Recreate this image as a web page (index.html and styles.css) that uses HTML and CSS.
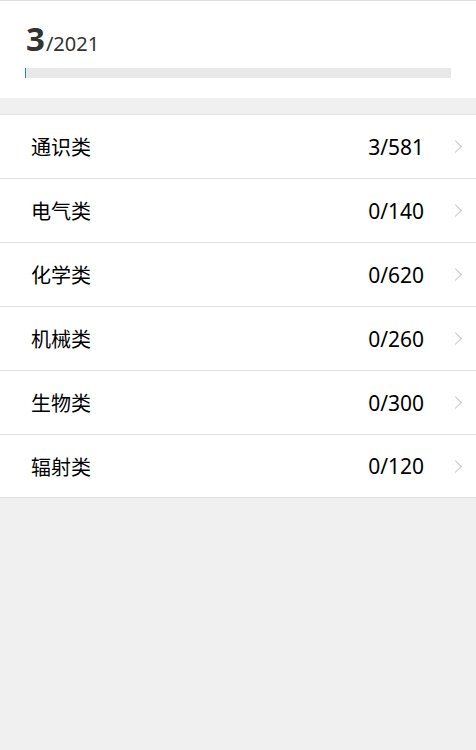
FILE: index.html
```html
<!DOCTYPE html>
<html lang="zh-CN">
<head>
    <meta charset="UTF-8" />
    <meta name="viewport" content="width=device-width, initial-scale=1" />
    <title>答题进度</title>
    <link rel="stylesheet" href="styles.css">
</head>
<body>

    <header class="summary">
        <div class="score">
            <span class="score-done">3</span><span class="score-total">/2021</span>
        </div>
        <div class="progress">
            <div class="progress-fill" style="width: 0.15%"></div>
        </div>
    </header>

    <ul class="category-list">
        <li class="category">
            <span class="category-name">通识类</span>
            <span class="category-count">3/581</span>
            <span class="chevron"></span>
        </li>
        <li class="category">
            <span class="category-name">电气类</span>
            <span class="category-count">0/140</span>
            <span class="chevron"></span>
        </li>
        <li class="category">
            <span class="category-name">化学类</span>
            <span class="category-count">0/620</span>
            <span class="chevron"></span>
        </li>
        <li class="category">
            <span class="category-name">机械类</span>
            <span class="category-count">0/260</span>
            <span class="chevron"></span>
        </li>
        <li class="category">
            <span class="category-name">生物类</span>
            <span class="category-count">0/300</span>
            <span class="chevron"></span>
        </li>
        <li class="category">
            <span class="category-name">辐射类</span>
            <span class="category-count">0/120</span>
            <span class="chevron"></span>
        </li>
    </ul>

</body>
</html>
```

FILE: styles.css
```css
body {
    margin: 0;
    font-family: 'Noto Sans', 'Noto Sans CJK SC', sans-serif;
    background-color: #f0f0f0;
    color: #000;
    border-top: 1px solid #dddddd;
}

.summary {
    background-color: white;
    padding: 18px 25px 20px;
}

.score {
    color: #333;
    line-height: 40px;
    padding-left: 1px;
}

.score-done {
    font-size: 33px;
    font-weight: bold;
}

.score-total {
    font-size: 20px;
    margin-left: 1px;
}

.progress {
    margin-top: 3px;
    height: 10px;
    background-color: #e8e8e8;
}

.progress-fill {
    height: 100%;
    min-width: 1px;
    background-color: #2a7de1;
}

.category-list {
    list-style: none;
    margin: 16px 0 0;
    padding: 0;
    background-color: white;
    border-top: 1px solid #e0e0e0;
    border-bottom: 1px solid #e0e0e0;
}

.category {
    display: flex;
    align-items: center;
    height: 63px;
    padding: 0 14px 0 31px;
    border-top: 1px solid #e0e0e0;
    font-size: 20px;
}

.category:first-child {
    border-top: none;
}

.category:last-child {
    height: 62px;
}

.category-name {
    flex: 1;
    font-family: 'Noto Sans CJK SC', sans-serif;
}

.category-count {
    font-size: 21px;
    margin-right: 27px;
}

.chevron {
    width: 8px;
    height: 8px;
    border-top: 1.5px solid #c4c4c4;
    border-right: 1.5px solid #c4c4c4;
    transform: rotate(45deg);
    margin-right: 2px;
}
```
